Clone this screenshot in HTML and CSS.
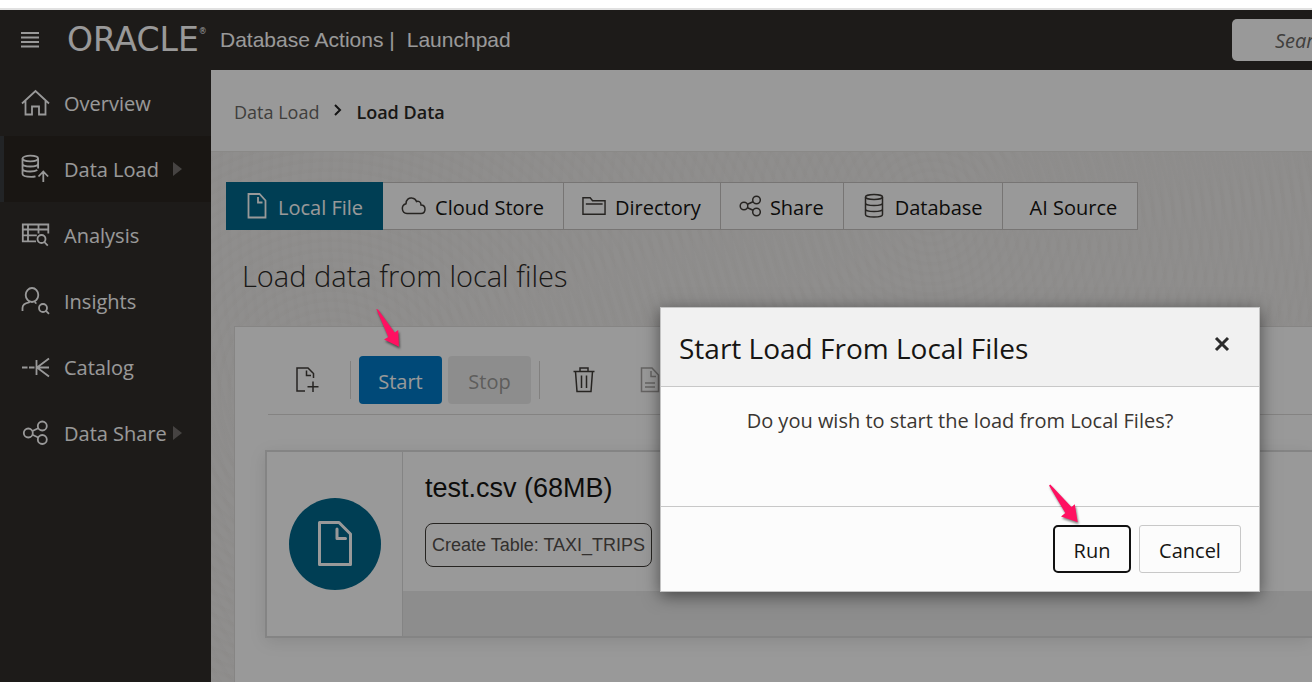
FILE: index.html
```html
<!DOCTYPE html>
<html lang="en">
<head>
<meta charset="utf-8">
<title>Database Actions | Launchpad</title>
<link rel="stylesheet" href="styles.css">
</head>
<body>
<div class="app">
  <header class="topbar">
    <button class="menu-btn" aria-label="Menu">
      <svg width="18" height="16" viewBox="0 0 18 16"><path d="M0 1h18M0 5.500h18M0 10h18M0 14.500h18" stroke="currentColor" stroke-width="1.800"/></svg>
    </button>
    <span class="logo">ORACLE<sup>®</sup></span>
    <span class="product">Database Actions |</span>
    <span class="product page-name">Launchpad</span>
    <input class="search" type="search" placeholder="Search" aria-label="Search">
  </header>

  <div class="body">
    <nav class="sidebar">
      <a class="nav-item" href="#">
        <svg class="nav-icon" viewBox="0 0 28 28"><path d="M1 14.500 14.500 2 28 14.500M4.500 12v13.500h6.500v-8h7v8h6.500V12"/></svg>
        <span>Overview</span></a>
      <a class="nav-item selected" href="#">
        <svg class="nav-icon" viewBox="0 0 28 28"><ellipse cx="9.300" cy="3.500" rx="7.800" ry="2.800"/><path d="M1.500 3.500v15.500c0 2 5 2.800 9 2.800 2 0 3-.2 4-.5M17.100 3.500v10M1.500 8.500c0 2 4 3 7.800 3s7.800-1 7.800-3M1.500 13.500c0 2 4 3 7.800 3 3 0 5.500-.5 7-1.500M22.300 27V16.500M17.500 21.500l4.800-5 4.800 5"/></svg>
        <span>Data Load</span><span class="caret"></span></a>
      <a class="nav-item" href="#">
        <svg class="nav-icon" viewBox="0 0 28 28"><path d="M15 20.300H1.800V3.500h25.500v9M1.800 8.500h25.500M1.800 14.300h14M7 3.500v16.800M17.500 3.500v9"/><circle cx="20.500" cy="18" r="4"/><path d="m23.300 21 3.500 3.700"/></svg>
        <span>Analysis</span></a>
      <a class="nav-item" href="#">
        <svg class="nav-icon" viewBox="0 0 28 28"><ellipse cx="11" cy="8" rx="6.300" ry="7"/><path d="M1.500 24v-3c0-4 2.500-5 6.500-5.700v-1M14 14.500c0 1 .5 1.700 1.500 2"/><circle cx="22" cy="21" r="4"/><path d="m25 23.800 3 3"/></svg>
        <span>Insights</span></a>
      <a class="nav-item" href="#">
        <svg class="nav-icon" viewBox="0 0 28 28"><path d="M1 14.500h5.500M8 14.500h5.500M15.500 7v15M16 14.500 28 5.500M16 14.500h12M16 14.500l12 9"/></svg>
        <span>Catalog</span></a>
      <a class="nav-item" href="#">
        <svg class="nav-icon" viewBox="0 0 28 28"><circle cx="7.300" cy="14" r="4.500"/><circle cx="21.300" cy="7" r="4.500"/><circle cx="21.300" cy="20.500" r="4.500"/><path d="m11.500 12 5.700-2.800M11.500 15.800l5.700 2.700"/></svg>
        <span>Data Share</span><span class="caret"></span></a>
    </nav>

    <main class="main">
      <nav class="breadcrumb" aria-label="Breadcrumb">
        <a href="#">Data Load</a>
        <svg width="8" height="12" viewBox="0 0 8 12"><path d="m1 1 5 5-5 5" fill="none" stroke="#222" stroke-width="2"/></svg>
        <strong>Load Data</strong>
      </nav>

      <div class="content">
        <div class="tabs">
          <button class="tab active"><svg width="22" height="26" viewBox="0 0 22 26"><path d="M1.500 1h11L18.500 7.500V24.500h-17zM11 4v5.500h4.500" stroke-width="1.800"/></svg>Local File</button>
          <button class="tab"><svg width="25" height="20" viewBox="0 0 25 20"><path d="M6 17.500a5 5 0 0 1-1-9.800C5 3.500 8 1.500 11 2c2.500.3 4 2 4.500 3.500 2-1 4.500.5 4.500 3.500 2.500 0 4 1.800 4 4.300s-1.700 4.200-4 4.200z"/></svg>Cloud Store</button>
          <button class="tab"><svg width="24" height="20" viewBox="0 0 25 20"><path d="M1 1.500h7.500L11 4.500h13v14H1zM4 8h17.500"/></svg>Directory</button>
          <button class="tab"><svg width="22" height="22" viewBox="0 0 22 22"><circle cx="5" cy="11" r="3.800"/><circle cx="17.500" cy="5" r="3.800"/><circle cx="17.500" cy="17" r="3.800"/><path d="m8.500 9.300 5.500-2.600M8.500 12.700l5.500 2.600"/></svg>Share</button>
          <button class="tab"><svg width="24" height="26" viewBox="0 0 24 26"><ellipse cx="12" cy="4" rx="8.500" ry="2.500"/><path d="M3.500 4v17.500c0 1.500 4 2.500 8.500 2.500s8.500-1 8.500-2.500V4M3.500 10c0 1.500 4 2.500 8.500 2.500s8.500-1 8.500-2.500M3.500 16c0 1.500 4 2.500 8.500 2.500s8.500-1 8.500-2.500"/></svg>Database</button>
          <button class="tab">AI Source</button>
        </div>

        <h1 class="heading">Load data from local files</h1>

        <section class="panel">
          <div class="toolbar">
            <button class="icon-btn add" aria-label="Add file"><svg width="24" height="28" viewBox="0 0 24 28"><path d="M10 25H2V2h11l5.500 5.500V12M11.500 4.500v5H16M18 15.500v10.500M12.500 20.700H23.500"/></svg></button>
            <span class="divider"></span>
            <button class="btn primary">Start</button>
            <button class="btn disabled" disabled>Stop</button>
            <span class="divider"></span>
            <button class="icon-btn" aria-label="Delete"><svg width="24" height="28" viewBox="0 0 24 28"><path d="M1.500 5.500h21M8 5V2h8v3M3.500 5.500 5 25.500h14l1.500-20M9.500 9.500v12.500M14.500 9.500v12.500"/></svg></button>
            <button class="icon-btn faded" aria-label="Report" disabled><svg width="24" height="28" viewBox="0 0 24 28"><path d="M2.500 2H13l6.500 7v16.500h-17zM12 5v5.500h5M6 17h10M6 21h10"/></svg></button>
          </div>

          <article class="card">
            <div class="card-side">
              <span class="disc"><svg width="36" height="48" viewBox="0 0 36 48"><path d="M2.500 2.500H22L33.500 14v30.500h-31zM20 9v9.500h8.500" fill="none" stroke="#fff" stroke-width="3" stroke-linejoin="round" stroke-linecap="round"/></svg></span>
            </div>
            <div class="card-main">
              <div class="card-info">
                <h2 class="card-title">test.csv (68MB)</h2>
                <span class="chip">Create Table: TAXI_TRIPS</span>
              </div>
              <div class="card-foot"></div>
            </div>
          </article>
        </section>
      </div>
    </main>
  </div>

  <div class="backdrop"></div>

  <div class="dialog" role="dialog" aria-labelledby="dialog-title">
    <div class="dialog-head">
      <h2 id="dialog-title">Start Load From Local Files</h2>
      <button class="close" aria-label="Close"><svg width="16" height="16" viewBox="0 0 16 16"><path d="m2 2 12 12M14 2 2 14" stroke="#2b2b2b" stroke-width="3"/></svg></button>
    </div>
    <p class="dialog-body">Do you wish to start the load from Local Files?</p>
    <div class="dialog-foot">
      <button class="dialog-btn focused">Run</button>
      <button class="dialog-btn">Cancel</button>
    </div>
  </div>

  <svg class="arrow arrow-start" width="30" height="44" viewBox="0 0 30 44"><path d="M2.300 1 4 1.500l16.700 23 3.500-2.500L25 38.700 10 31.500l4.300-2.500z"/></svg>
  <svg class="arrow arrow-run" width="36" height="44" viewBox="0 0 36 44"><path d="M2 2.500 3.300 1.500l21.200 22.500 3.300-2.800L30.700 39.300 14 33.500l4.300-3.500z"/></svg>
</div>
</body>
</html>
```
FILE: styles.css
```css
* {
  box-sizing: border-box;
}

body {
  margin: 0;
  padding-top: 8px;
  background: #fff;
  font-family: "Open Sans", "Noto Sans", sans-serif;
  font-size: 20px;
  color: #161513;
}

button,
input {
  font: inherit;
  color: inherit;
}

button {
  border: 0;
  padding: 0;
  background: none;
}

svg {
  flex: none;
}

.app {
  position: relative;
  display: flex;
  flex-direction: column;
  min-height: calc(100vh - 8px);
  border-top: 2px solid #e1e1e1;
  overflow: hidden;
}

.topbar {
  display: flex;
  align-items: center;
  height: 60px;
  padding-left: 21px;
  background: #312d2a;
  color: #fff;
  overflow: hidden;
}

.menu-btn {
  display: flex;
  margin-right: 28px;
}

.logo {
  display: flex;
  flex: none;
  width: 153px;
  font-family: "DejaVu Sans", sans-serif;
  font-size: 33px;
  line-height: 40px;
}

.logo sup {
  font-size: 8px;
  line-height: 24px;
}

.product {
  font-family: "Liberation Sans", Arial, sans-serif;
  font-size: 21px;
  line-height: 24px;
  white-space: nowrap;
}

.page-name {
  margin-left: 12px;
}

.search {
  flex: none;
  width: 260px;
  height: 42px;
  margin-left: auto;
  margin-right: -180px;
  padding: 0 43px;
  border: 0;
  border-radius: 5px;
  background: #fff;
  font-style: italic;
}

.search::placeholder {
  color: #6b6966;
}

.body {
  display: flex;
  flex: 1;
}

.sidebar {
  flex: none;
  width: 211px;
  background: #312d2a;
}

.nav-item {
  display: flex;
  align-items: center;
  height: 66px;
  padding-left: 17px;
  padding-right: 29px;
  border-left: 4px solid transparent;
  color: #fff;
  line-height: 28px;
  text-decoration: none;
  white-space: nowrap;
}

.nav-item span {
  margin-top: 2px;
}

.nav-item.selected {
  background: #2b2521;
  border-left-color: #3a3d40;
}

.nav-icon {
  width: 28px;
  height: 28px;
  margin-right: 15px;
  overflow: visible;
  fill: none;
  stroke: #fff;
  stroke-width: 1.8px;
}

.nav-item .caret {
  margin: 0 0 0 auto;
  border: 7px solid transparent;
  border-left: 9px solid #75716e;
  border-right: 0;
}

.main {
  flex: 1;
  min-width: 0;
  display: flex;
  flex-direction: column;
}

.breadcrumb {
  display: flex;
  align-items: center;
  gap: 14px;
  height: 82px;
  padding-left: 23px;
  padding-top: 2px;
  border-bottom: 1px solid #e6e4e2;
  background: #fff;
  font-size: 18px;
}

.breadcrumb a {
  color: #6b6966;
  text-decoration: none;
}

.breadcrumb svg {
  margin: 0 0 4px 1px;
}

.breadcrumb strong {
  font-weight: 600;
  color: #2b2826;
}

.content {
  flex: 1;
  display: flex;
  flex-direction: column;
  padding: 30px 0 0 15px;
  background:
    repeating-radial-gradient(circle at 720px 60px, rgba(120, 110, 120, 0.02) 0 3px, transparent 5px 10px),
    repeating-radial-gradient(circle at 120px 240px, rgba(120, 110, 100, 0.02) 0 3px, transparent 5px 10px),
    #efedeb;
}

.tabs {
  display: flex;
  height: 48px;
}

.tab {
  display: flex;
  align-items: center;
  gap: 9px;
  padding: 2px 19px 0 18px;
  border: 1px solid #c6c4c2;
  border-left-width: 0;
  background: #fff;
  white-space: nowrap;
}

.tab svg,
.icon-btn svg {
  fill: none;
  stroke: #403c38;
  stroke-width: 1.5px;
}

.tab svg {
  margin-bottom: 3px;
}

.tab.active {
  padding-left: 21px;
  border-color: #00688c;
  background: #00688c;
  color: #fff;
}

.tab.active svg {
  stroke: #fff;
}

.tab:last-child {
  padding: 2px 20px 0 27px;
}

.heading {
  margin: 26px 0 30px 16px;
  color: #2b2826;
  font-size: 29px;
  line-height: 40px;
  font-weight: 300;
}

.panel {
  flex: 1;
  margin-left: 8px;
  padding: 21px 0 44px 30px;
  border: 1px solid #e0dedc;
  border-right: 0;
  background: #fff;
}

.toolbar {
  display: flex;
  align-items: center;
  margin-left: 3px;
  padding: 8px 0 10px;
  border-bottom: 1px solid #dddbd9;
}

.icon-btn {
  display: flex;
  justify-content: center;
  width: 72px;
}

.icon-btn.add {
  width: 82px;
  padding-right: 4px;
}

.icon-btn.faded {
  width: 62px;
  opacity: 0.45;
}

.divider {
  width: 1px;
  height: 38px;
  margin-right: 8px;
  background: #d8d6d4;
}

.btn {
  width: 83px;
  height: 48px;
  padding-top: 2px;
  margin-right: 6px;
  border-radius: 4px;
}

.btn.primary {
  background: #007bc8;
  color: #fff;
}

.btn.disabled {
  margin-right: 8px;
  background: #ececec;
  color: #9d9b99;
}

.card {
  display: flex;
  margin-top: 35px;
  min-height: 188px;
  border: 2px solid #dcdcdc;
  border-right: 0;
  box-shadow: 0 4px 16px rgba(0, 0, 0, 0.1);
}

.card-side {
  flex: none;
  display: flex;
  align-items: center;
  justify-content: center;
  width: 136px;
  border-right: 1px solid #dcdcdc;
}

.disc {
  display: flex;
  align-items: center;
  justify-content: center;
  width: 92px;
  height: 92px;
  border-radius: 50%;
  background: #00688c;
}

.card-main {
  flex: 1;
  display: flex;
  flex-direction: column;
}

.card-info {
  flex: 1;
  padding: 20px 22px;
  font-family: "Liberation Sans", Arial, sans-serif;
}

.card-title {
  margin: 0 0 19px;
  font-size: 27px;
  line-height: 32px;
  font-weight: 400;
}

.chip {
  display: inline-block;
  padding: 0 6px;
  border: 1px solid #403c38;
  border-radius: 8px;
  color: #55514e;
  font-size: 18px;
  line-height: 42px;
}

.card-foot {
  height: 45px;
  background: #ebebeb;
}

.backdrop {
  position: absolute;
  inset: 0;
  background: rgba(0, 0, 0, 0.4);
}

.dialog {
  position: absolute;
  top: 297px;
  right: 52px;
  width: 600px;
  border: 1px solid #c4c4c4;
  background: #fcfcfc;
  box-shadow: 0 4px 16px rgba(0, 0, 0, 0.5);
}

.dialog-head {
  display: flex;
  justify-content: space-between;
  align-items: center;
  height: 79px;
  padding: 0 29px 0 18px;
  border-bottom: 1px solid #c8c8c8;
  background: #f1f1f1;
}

.dialog-head h2 {
  margin: 2px 0 0;
  font-size: 28px;
  line-height: 36px;
  font-weight: 400;
}

.close {
  display: flex;
  margin-bottom: 7px;
}

.dialog-body {
  height: 120px;
  margin: 0;
  padding-top: 20px;
  border-bottom: 1px solid #c8c8c8;
  color: #3a3632;
  line-height: 28px;
  text-align: center;
}

.dialog-foot {
  display: flex;
  justify-content: flex-end;
  gap: 8px;
  padding: 18px;
}

.dialog-btn {
  width: 102px;
  height: 48px;
  padding-top: 2px;
  border: 1px solid #c8c8c8;
  border-radius: 3px;
}

.dialog-btn.focused {
  width: 78px;
  border: 2px solid #111;
  border-radius: 5px;
}

.arrow {
  position: absolute;
  fill: #ff1061;
  filter: drop-shadow(1px 2px 1px rgba(0, 0, 0, 0.5));
}

.arrow-start {
  top: 298px;
  left: 374px;
}

.arrow-run {
  top: 473px;
  right: 229px;
}
```
